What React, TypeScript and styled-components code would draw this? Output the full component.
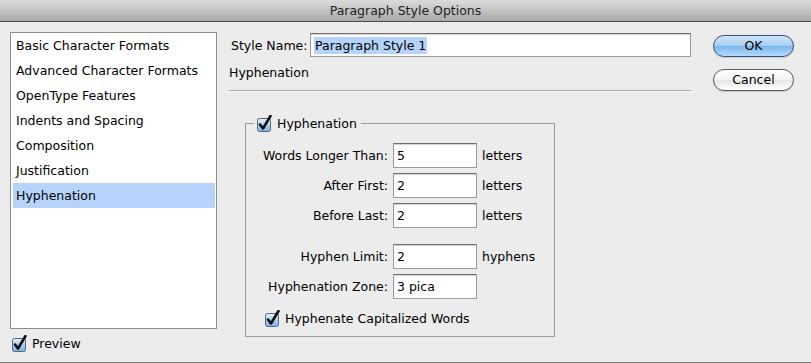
import React from "react";
import styled, { createGlobalStyle } from "styled-components";

const Global = createGlobalStyle`
  html, body { margin: 0; padding: 0; background: #ececec; }
  body { font-family: "DejaVu Sans", "Noto Sans", sans-serif; color: #000; }
  * { box-sizing: border-box; }
`;

const Window = styled.div`
  width: 811px;
  height: 363px;
  display: flex;
  flex-direction: column;
  background: #ececec;
  overflow: hidden;
`;

const TitleBar = styled.div`
  height: 22px;
  flex: 0 0 22px;
  display: flex;
  align-items: center;
  justify-content: center;
  background: linear-gradient(#dcdcdc, #a9a9a9);
  border-bottom: 1px solid #4e4e4e;
  font-size: 12.5px;
  color: #1e1e1e;
  padding-bottom: 1px;
`;

const Body = styled.div`
  flex: 1;
  display: flex;
  padding: 10px 17px 0 10px;
`;

const Sidebar = styled.div`
  width: 208px;
  display: flex;
  flex-direction: column;
`;

const ListBox = styled.div`
  height: 297px;
  background: #fff;
  border: 1px solid #8d8d8d;
  padding: 0 1px 0 2px;
  display: flex;
  flex-direction: column;
`;

const ListItem = styled.div<{ $selected?: boolean }>`
  height: 25px;
  flex: 0 0 25px;
  display: flex;
  align-items: center;
  padding-left: 3px;
  font-size: 12.5px;
  background: ${(p) => (p.$selected ? "#b5d3fb" : "transparent")};
`;

const CheckRow = styled.label`
  display: flex;
  align-items: center;
  gap: 4px;
  font-size: 12.5px;
`;

const PreviewRow = styled(CheckRow)`
  margin-top: 6px;
  padding-left: 2px;
`;

const Main = styled.div`
  width: 462px;
  margin-left: 12px;
  display: flex;
  flex-direction: column;
`;

const NameRow = styled.div`
  display: flex;
  align-items: center;
  height: 24px;
  margin-top: 1px;
`;

const NameLabel = styled.span`
  font-size: 12.5px;
  padding-left: 2px;
  width: 81px;
`;

const TextBox = styled.div<{ $width: number }>`
  width: ${(p) => p.$width}px;
  height: 100%;
  background: #fff;
  border: 1px solid #9a9a9a;
  border-top-color: #6f6f6f;
  box-shadow: inset 0 1px 1px rgba(0, 0, 0, 0.18);
  display: flex;
  align-items: center;
  padding-left: 3px;
  font-size: 12.5px;
`;

const Highlight = styled.span`
  background: #b5d3fb;
  padding: 1px 1px;
`;

const SectionTitle = styled.div`
  font-size: 12.5px;
  margin-top: 8px;
  height: 16px;
  line-height: 16px;
`;

const Divider = styled.div`
  margin-top: 9px;
  height: 1px;
  background: #a3a3a3;
  box-shadow: 0 1px 0 #f8f8f8;
`;

const Group = styled.fieldset`
  margin: 24px 0 0 16px;
  width: 310px;
  height: 222px;
  border: 1px solid #9c9c9c;
  padding: 11px 0 0 14px;
  min-width: 0;
`;

const Legend = styled.legend`
  margin-left: -6px;
  padding: 0 4px 0 3px;
`;

const Fields = styled.div<{ $gapAbove?: number }>`
  display: grid;
  grid-template-columns: 128px 84px auto;
  grid-auto-rows: 25px;
  column-gap: 5px;
  row-gap: 5px;
  align-items: center;
  margin-top: ${(p) => p.$gapAbove ?? 0}px;
`;

const FieldLabel = styled.span`
  text-align: right;
  font-size: 12.5px;
`;

const Unit = styled.span`
  font-size: 12.5px;
`;

const CapsRow = styled(CheckRow)`
  margin-top: 11px;
  padding-left: 5px;
`;

const Buttons = styled.div`
  margin-left: 22px;
  display: flex;
  flex-direction: column;
  gap: 12px;
  padding-top: 3px;
`;

const PillButton = styled.button<{ $primary?: boolean }>`
  width: 81px;
  height: 22px;
  border-radius: 11px;
  font-family: inherit;
  font-size: 12.5px;
  color: #000;
  padding: 0 0 1px;
  border: 1px solid ${(p) => (p.$primary ? "#3a4f86" : "#5a5a5a")};
  background: ${(p) =>
    p.$primary
      ? "linear-gradient(#cfe4f8 0%, #a6cdf1 48%, #7ab6ec 52%, #b4dbfb 100%)"
      : "linear-gradient(#ffffff 0%, #f4f4f4 48%, #e6e6e6 52%, #ffffff 100%)"};
  box-shadow: 0 1px 1px rgba(0, 0, 0, 0.15);
`;

const BottomEdge = styled.div`
  height: 1px;
  flex: 0 0 1px;
  background: #7c7c7c;
`;

const CheckIcon = () => (
  <svg width="16" height="17" viewBox="0 0 16 17" style={{ flex: "0 0 auto" }}>
    <defs>
      <linearGradient id="cbg" x1="0" y1="0" x2="0" y2="1">
        <stop offset="0" stopColor="#e6f1fc" />
        <stop offset="0.5" stopColor="#a9cff0" />
        <stop offset="1" stopColor="#78b2e6" />
      </linearGradient>
    </defs>
    <rect x="0.5" y="3.5" width="13" height="13" rx="2" fill="url(#cbg)" stroke="#56657a" />
    <path d="M3 9.5 L6 13.5 L13.5 1" fill="none" stroke="#111" strokeWidth="2.6" strokeLinecap="round" strokeLinejoin="round" />
  </svg>
);

const categories = [
  "Basic Character Formats",
  "Advanced Character Formats",
  "OpenType Features",
  "Indents and Spacing",
  "Composition",
  "Justification",
  "Hyphenation",
];

const fieldsA = [
  { label: "Words Longer Than:", value: "5", unit: "letters" },
  { label: "After First:", value: "2", unit: "letters" },
  { label: "Before Last:", value: "2", unit: "letters" },
];
const fieldsB = [
  { label: "Hyphen Limit:", value: "2", unit: "hyphens" },
  { label: "Hyphenation Zone:", value: "3 pica", unit: "" },
];

type Field = { label: string; value: string; unit: string };

const FieldList = ({ items, gapAbove }: { items: Field[]; gapAbove?: number }) => (
  <Fields $gapAbove={gapAbove}>
    {items.map((f) => (
      <React.Fragment key={f.label}>
        <FieldLabel>{f.label}</FieldLabel>
        <TextBox $width={84}>{f.value}</TextBox>
        <Unit>{f.unit}</Unit>
      </React.Fragment>
    ))}
  </Fields>
);

export default function App() {
  return (
    <>
      <Global />
      <Window>
        <TitleBar>Paragraph Style Options</TitleBar>
        <Body>
          <Sidebar>
            <ListBox>
              {categories.map((c) => (
                <ListItem key={c} $selected={c === "Hyphenation"}>
                  {c}
                </ListItem>
              ))}
            </ListBox>
            <PreviewRow>
              <CheckIcon />
              Preview
            </PreviewRow>
          </Sidebar>
          <Main>
            <NameRow>
              <NameLabel>Style Name:</NameLabel>
              <TextBox $width={381}>
                <Highlight>Paragraph Style 1</Highlight>
              </TextBox>
            </NameRow>
            <SectionTitle>Hyphenation</SectionTitle>
            <Divider />
            <Group>
              <Legend>
                <CheckRow>
                  <CheckIcon />
                  Hyphenation
                </CheckRow>
              </Legend>
              <FieldList items={fieldsA} />
              <FieldList items={fieldsB} gapAbove={16} />
              <CapsRow>
                <CheckIcon />
                Hyphenate Capitalized Words
              </CapsRow>
            </Group>
          </Main>
          <Buttons>
            <PillButton $primary>OK</PillButton>
            <PillButton>Cancel</PillButton>
          </Buttons>
        </Body>
        <BottomEdge />
      </Window>
    </>
  );
}
